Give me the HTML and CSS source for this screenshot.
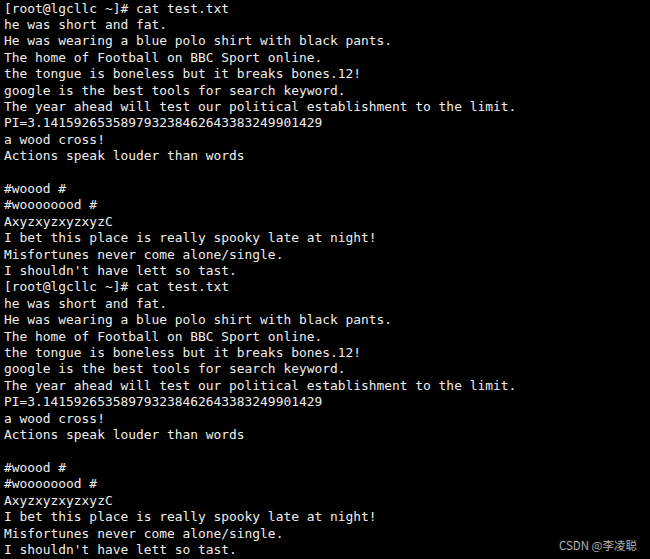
FILE: index.html
```html
<!DOCTYPE html>
<html>
<head>
<meta charset="utf-8">
<link rel="stylesheet" href="styles.css">
</head>
<body>
<div class="term">
<pre class="out">[root@lgcllc ~]# cat test.txt
he was short and fat.
He was wearing a blue polo shirt with black pants.
The home of Football on BBC Sport online.
the tongue is boneless but it breaks bones.12!
google is the best tools for search keyword.
The year ahead will test our political establishment to the limit.
PI=3.141592653589793238462643383249901429
a wood cross!
Actions speak louder than words

#woood #
#woooooood #
AxyzxyzxyzxyzC
I bet this place is really spooky late at night!
Misfortunes never come alone/single.
I shouldn't have lett so tast.
[root@lgcllc ~]# cat test.txt
he was short and fat.
He was wearing a blue polo shirt with black pants.
The home of Football on BBC Sport online.
the tongue is boneless but it breaks bones.12!
google is the best tools for search keyword.
The year ahead will test our political establishment to the limit.
PI=3.141592653589793238462643383249901429
a wood cross!
Actions speak louder than words

#woood #
#woooooood #
AxyzxyzxyzxyzC
I bet this place is really spooky late at night!
Misfortunes never come alone/single.
I shouldn't have lett so tast.</pre>
<div class="mark">CSDN @李凌聪</div>
</div>
</body>
</html>
```
FILE: styles.css
```css
html, body {
  margin: 0;
  padding: 0;
  background: #000;
}
.term {
  position: relative;
  width: 650px;
  height: 559px;
  overflow: hidden;
  background: #000;
}
.out {
  margin: 0;
  padding: 0.5px 0 0 4px;
  font-family: "DejaVu Sans Mono", monospace;
  font-size: 12.9px;
  line-height: 16.4px;
  color: #eeeeee;
  white-space: pre;
}
.mark {
  position: absolute;
  right: 13px;
  bottom: 6px;
  font-family: "Noto Sans CJK SC", "Noto Sans", sans-serif;
  font-size: 11.5px;
  color: #b4b4b4;
}
```
